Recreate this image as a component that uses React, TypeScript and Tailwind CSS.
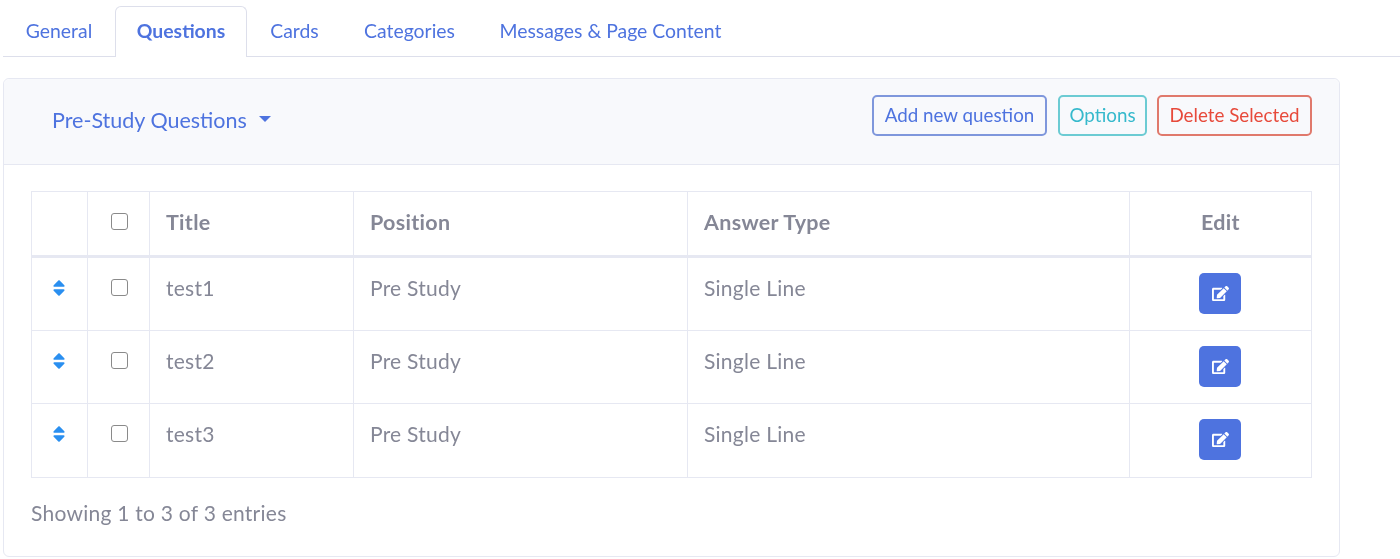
import { FaEdit, FaSort } from "react-icons/fa";

const tabs = [
  { label: "General", w: "w-[112px]" },
  { label: "Questions", w: "w-[132px]", active: true },
  { label: "Cards", w: "w-[95px]" },
  { label: "Categories", w: "w-[135px]" },
  { label: "Messages & Page Content", w: "w-[267px]" },
];

const rows = ["test1", "test2", "test3"];
const cell = "border border-[#e6e8f2] px-4 align-top leading-[29px]";
const body = "text-[21px] tracking-[0.25px]";
const head = "text-[21.5px] tracking-[0.3px]";

function Box() {
  return <span className="block h-[17px] w-[17px] rounded-[3px] border border-[#8a8a8a] bg-white" />;
}

export default function App() {
  return (
    <div className="h-[559px] w-[1400px] overflow-hidden bg-white font-['Lato','Noto_Sans',sans-serif] text-[#858796] blur-[0.4px]">
      <div className="ml-[3px] mt-[3px] flex h-[54px] w-[1397px] items-end border-b border-[#dddfeb] pt-[6px]">
        {tabs.map((t) =>
          t.active ? (
            <div
              key={t.label}
              className={`${t.w} -mb-px flex h-[51px] items-center justify-center rounded-t-[6px] border border-b-0 border-[#dddfeb] bg-white pb-[2px] text-[19.4px] font-bold text-[#4e73df]`}
            >
              {t.label}
            </div>
          ) : (
            <div key={t.label} className={`${t.w} flex h-[50px] items-center justify-center text-[19.4px] text-[#4e73df]`}>
              {t.label}
            </div>
          ),
        )}
      </div>

      <div className="ml-[3px] mt-[21px] h-[479px] w-[1337px] rounded-[6px] border border-[#e6e8f2] bg-white">
        <div className="flex h-[86px] items-start justify-between rounded-t-[6px] border-b border-[#e6e8f2] bg-[#f8f9fc] pl-[48px] pr-[27px]">
          <div className="mt-[26px] flex items-center text-[21.5px] leading-[30px] text-[#4e73df]">
            Pre-Study Questions
            <span className="ml-[12px] h-0 w-0 -translate-y-[1px] border-x-[6px] border-t-[6px] border-x-transparent border-t-[#4e73df]" />
          </div>
          <div className="mt-[16px] flex gap-[10px] text-[18.8px]">
            <button className="mr-px h-[41px] w-[175px] rounded-[5px] border-2 border-[#7f97dc] text-[#4e73df]">Add new question</button>
            <button className="h-[41px] w-[89px] rounded-[5px] border-2 border-[#6ccbd3] text-[#36b9cc]">Options</button>
            <button className="h-[41px] w-[155px] rounded-[5px] border-2 border-[#e0796c] text-[#e74a3b]">Delete Selected</button>
          </div>
        </div>

        <div className="pl-[27px] pt-[26px]">
          <table className="w-[1280px] table-fixed border-collapse border border-[#e6e8f2]">
            <colgroup>
              <col className="w-[56px]" />
              <col className="w-[62px]" />
              <col className="w-[204px]" />
              <col className="w-[334px]" />
              <col className="w-[442px]" />
              <col className="w-[182px]" />
            </colgroup>
            <thead>
              <tr className="h-[65px] border-b-[3px] border-[#e6e8f2] font-bold">
                <th className={cell} />
                <th className={cell}>
                  <div className="mt-[21px] flex justify-center pl-[1px]"><Box /></div>
                </th>
                <th className={`${cell} ${head} pt-[16px] text-left`}>Title</th>
                <th className={`${cell} ${head} pt-[16px] text-left`}>Position</th>
                <th className={`${cell} ${head} pt-[16px] text-left`}>Answer Type</th>
                <th className={`${cell} ${head} pt-[16px] text-center`}>Edit</th>
              </tr>
            </thead>
            <tbody>
              {rows.map((r) => (
                <tr key={r} className="h-[73.5px]">
                  <td className={cell}>
                    <div className="mt-[20px] flex justify-center pr-[1px]">
                      <FaSort className="h-[20px] w-[20px] text-[#2a8ff0]" />
                    </div>
                  </td>
                  <td className={cell}>
                    <div className="mt-[21px] flex justify-center pl-[1px]"><Box /></div>
                  </td>
                  <td className={`${cell} ${body} pt-[15px]`}>{r}</td>
                  <td className={`${cell} ${body} pt-[15px]`}>Pre Study</td>
                  <td className={`${cell} ${body} pt-[15px]`}>Single Line</td>
                  <td className={cell}>
                    <div className="flex justify-center pr-[1px] pt-[15px]">
                      <button className="flex h-[41px] w-[42px] items-center justify-center rounded-[5px] bg-[#4e73df] text-white">
                        <FaEdit className="h-[17px] w-[17px]" />
                      </button>
                    </div>
                  </td>
                </tr>
              ))}
            </tbody>
          </table>
          <div className={`mt-[20px] leading-[29px] ${body}`}>Showing 1 to 3 of 3 entries</div>
        </div>
      </div>
    </div>
  );
}
